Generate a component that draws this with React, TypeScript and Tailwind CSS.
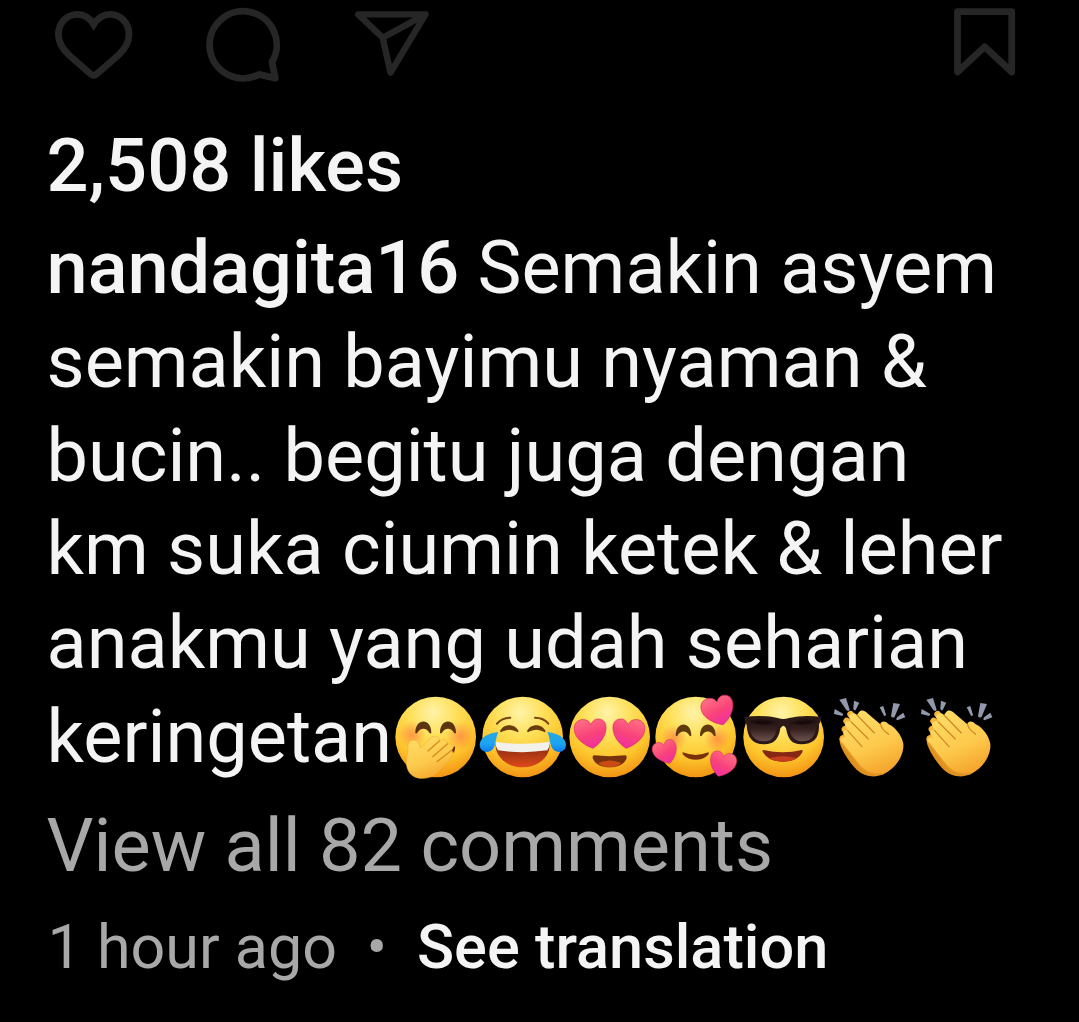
import type { ReactNode } from "react"

interface EmojiProps {
  label: string
  children: ReactNode
}

const HEART = "M54 96 C26 82 0 60 0 31 C0 11 13 1 28 1 C40 1 49 8 53 19 C59 7 68 1 79 3 C95 5 102 19 99 38 C95 62 76 84 54 96Z"
const EYE = "M0 34 C0 -11 48 -11 48 34 Q46 39 42 34 C34 18 14 18 6 34 Q2 39 0 34Z"

const Emoji = ({ label, children }: EmojiProps) => (
  <svg role="img" aria-label={label} viewBox="0 0 261 270" className="w-[87px] h-[90px] shrink-0 overflow-visible">
    {children}
  </svg>
)

const Face = () => <circle cx="131" cy="129" r="121" fill="url(#face)" />

const Heart = ({ transform }: { transform: string }) => (
  <path d={HEART} transform={transform} fill="url(#heart)" stroke="#d82a5c" strokeWidth="2" />
)

const Gradients = () => (
  <svg className="absolute w-0 h-0" aria-hidden="true">
    <defs>
      <radialGradient id="face" cx="0.47" cy="0.2" r="0.82">
        <stop offset="0" stopColor="#fff3a8" />
        <stop offset="0.35" stopColor="#fee05a" />
        <stop offset="0.7" stopColor="#fdc52c" />
        <stop offset="1" stopColor="#f28f12" />
      </radialGradient>
      <linearGradient id="heart" x1="0.3" y1="0" x2="0.6" y2="1">
        <stop offset="0" stopColor="#ff6f83" />
        <stop offset="0.55" stopColor="#f8427a" />
        <stop offset="1" stopColor="#f02fa4" />
      </linearGradient>
      <radialGradient id="blush">
        <stop offset="0" stopColor="#ff7043" stopOpacity="0.6" />
        <stop offset="1" stopColor="#ff7043" stopOpacity="0" />
      </radialGradient>
      <linearGradient id="mouth" x1="0" y1="0" x2="0" y2="1">
        <stop offset="0" stopColor="#7c2a0c" />
        <stop offset="1" stopColor="#e0491c" />
      </linearGradient>
      <linearGradient id="tear" x1="0" y1="0" x2="0" y2="1">
        <stop offset="0" stopColor="#29a8dc" />
        <stop offset="0.6" stopColor="#1ca4f4" />
        <stop offset="1" stopColor="#0a7bea" />
      </linearGradient>
      <linearGradient id="lens" x1="0" y1="0" x2="0" y2="1">
        <stop offset="0" stopColor="#1d0f0e" />
        <stop offset="0.45" stopColor="#35201f" />
        <stop offset="1" stopColor="#6e5350" />
      </linearGradient>
      <linearGradient id="hand" x1="0.2" y1="0" x2="0.6" y2="1">
        <stop offset="0" stopColor="#ffdd67" />
        <stop offset="0.6" stopColor="#fdc94c" />
        <stop offset="1" stopColor="#f5a52c" />
      </linearGradient>
    </defs>
  </svg>
)

const HandOverMouth = () => (
  <Emoji label="🤭">
    <Face />
    <circle cx="60" cy="122" r="42" fill="url(#blush)" />
    <circle cx="206" cy="126" r="44" fill="url(#blush)" />
    <path d={EYE} transform="translate(70 82)" fill="#5b3410" />
    <path d={EYE} transform="translate(144 82)" fill="#5b3410" />
    <path d="M164 172 Q178 170 188 156 Q194 171 176 183Z" fill="#6d2511" />
    <path
      d="M48 158 C46 138 70 132 78 145 L86 162 L118 130 C130 121 145 130 142 141 C153 132 169 138 166 150 C178 146 188 158 179 169 C187 176 182 187 175 195 L142 232 C124 248 112 252 96 253 C71 256 49 243 44 216 C39 199 49 181 48 158Z"
      fill="url(#hand)"
      stroke="#eba526"
      strokeWidth="1.5"
    />
    <path d="M142 141 L108 171 M166 150 L122 188 M179 169 L135 203" fill="none" stroke="#d98c1b" strokeWidth="4" strokeLinecap="round" />
  </Emoji>
)

const TearsOfJoy = () => (
  <Emoji label="😂">
    <Face />
    <g fill="none" stroke="#79420f" strokeWidth="6" strokeLinecap="round">
      <path d="M54 89 Q68 71 94 71" />
      <path d="M168 71 Q194 71 208 89" />
    </g>
    <path d="M63 112 C73 88 108 88 119 112 Q117 117 110 112 Q91 102 72 112 Q65 117 63 112Z" fill="#693c0e" />
    <path d="M144 112 C154 88 189 88 200 112 Q198 117 191 112 Q172 102 153 112 Q146 117 144 112Z" fill="#693c0e" />
    <path d="M50 147 Q131 157 212 147 C215 190 177 220 131 220 C85 220 47 190 50 147Z" fill="url(#mouth)" />
    <path d="M50 144 Q131 155 212 144 Q214 157 205 169 Q131 180 57 169 Q49 157 50 144Z" fill="#f3f1ec" />
    <path d="M58 114 C31 116 2 130 2 153 C3 177 35 181 45 160 C51 146 50 132 58 114Z" fill="url(#tear)" />
    <path d="M205 114 C232 116 261 130 261 153 C260 177 228 181 218 160 C212 146 213 132 205 114Z" fill="url(#tear)" />
  </Emoji>
)

const HeartEyes = () => (
  <Emoji label="😍">
    <Face />
    <Heart transform="translate(26 74) rotate(-4 50 50) scale(.96 .93)" />
    <Heart transform="translate(235 74) rotate(4 -50 50) scale(-.96 .93)" />
    <path d="M84 184 Q131 189 178 184 Q183 184 182 191 C177 210 157 220 131 220 C105 220 85 210 80 191 Q79 184 84 184Z" fill="#78310d" />
    <path d="M96 207 Q131 192 166 207 Q151 220 131 220 Q111 220 96 207Z" fill="#c94b13" />
  </Emoji>
)

const SmilingHearts = () => (
  <Emoji label="🥰">
    <circle cx="128" cy="129" r="121" fill="url(#face)" />
    <circle cx="62" cy="132" r="40" fill="url(#blush)" />
    <circle cx="194" cy="136" r="40" fill="url(#blush)" />
    <path d={EYE} transform="translate(68 91) scale(.98)" fill="#603a0d" />
    <path d={EYE} transform="translate(141 91) scale(.98)" fill="#603a0d" />
    <path d="M90 175 Q128 191 166 175 Q170 178 164 184 C146 202 110 202 92 184 Q86 178 90 175Z" fill="#7b300c" />
    <Heart transform="translate(148 6) rotate(-14 50 48) scale(.97 .92)" />
    <Heart transform="translate(1 139) rotate(-17 37 36) scale(.73 .74)" />
    <Heart transform="translate(248 173) rotate(14 -40 38) scale(-.79 .79)" />
  </Emoji>
)

const Sunglasses = () => (
  <Emoji label="😎">
    <Face />
    <path
      d="M13 69 Q68 62 113 72 Q130 78 147 72 Q192 62 244 69 L241 84 Q239 87 237 91 C239 132 220 151 184 151 C156 151 144 137 138 103 Q131 88 121 103 C116 137 100 151 74 151 C38 151 22 132 20 93 Q18 87 15 84Z"
      fill="#2b1917"
    />
    <path d="M27 80 Q67 70 111 84 C114 116 101 142 73 142 C40 142 27 120 27 80Z" fill="url(#lens)" />
    <path d="M149 84 Q190 70 230 80 C230 120 218 142 186 142 C157 142 145 116 149 84Z" fill="url(#lens)" />
    <path d="M33 84 Q67 77 99 86 Q69 99 33 84Z M159 86 Q190 77 222 84 Q190 99 159 86Z" fill="#0d0505" opacity="0.6" />
    <path d="M70 168 Q129 182 186 168 Q190 169 187 175 C178 193 157 203 129 203 C101 203 79 193 69 175 Q66 169 70 168Z" fill="#852713" />
    <path d="M86 193 Q129 181 171 193 Q155 203 129 203 Q102 203 86 193Z" fill="#c43d1d" />
  </Emoji>
)

const Clap = () => (
  <Emoji label="👏">
    <g fill="#9199ab">
      <path d="M23 45 L48 59 Q50 66 43 65 L21 60Z" />
      <path d="M37 17 L57 12 L68 47 Q65 55 58 48Z" />
      <path d="M81 20 L97 26 L86 48 Q81 52 79 43Z" />
      <path d="M158 40 L169 36 L177 62 Q175 69 170 64Z" />
      <path d="M199 27 L219 30 L203 68 Q196 74 192 66Z" />
      <path d="M229 56 L235 70 L211 79 Q205 77 211 69Z" />
    </g>
    {/* back hand */}
    <path d="M39 127 C35 142 40 157 51 176 C73 212 94 243 132 247 C157 249 181 238 190 225 L80 105Z" fill="#df9020" />
    <g stroke="#f8b53c" strokeLinecap="round" strokeWidth="20">
      <path d="M71 61 L84 76 M59 81 L75 96 M54 106 L68 122 M48 135 L70 161" />
    </g>
    {/* front hand */}
    <path
      d="M96 55 C102 45 115 50 123 59 L160 91 C162 78 178 81 185 91 C205 100 224 124 229 149 C232 183 207 222 174 237 C144 248 111 233 91 208 L43 146 C36 134 48 127 57 133 L51 124 C43 110 56 103 66 111 L56 98 C48 83 64 78 73 84 L68 75 C63 57 81 54 90 63Z"
      fill="url(#hand)"
    />
    <path
      d="M90 63 L142 117 M73 84 L124 135 M62 110 L105 158 M161 91 Q162 105 185 121"
      fill="none"
      stroke="#cd8627"
      strokeWidth="3.5"
      strokeLinecap="round"
    />
    <path d="M43 146 L91 208 C108 232 136 244 169 239" fill="none" stroke="#e39a27" strokeWidth="5" />
  </Emoji>
)

const Actions = () => (
  <div className="flex h-[90px] pl-[1.5px] pr-[2px] fill-none stroke-[#262626] [stroke-linejoin:round] [stroke-linecap:round]">
    <svg viewBox="0 0 90 90" strokeWidth="6.8" className="w-[90px] h-[90px]">
      <path d="M45.7 24.5 C41.5 17.5 35.5 14.3 29.5 14.3 C18.5 14.3 10.4 23 10.4 34.5 C10.4 43.5 15.5 50 21.5 55.5 L42.6 74 Q45.7 76.8 48.8 74 L70 55.5 C76 50 81 43.5 81 34.5 C81 23 72.9 14.3 62 14.3 C56 14.3 50 17.5 45.7 24.5Z" strokeLinejoin="miter" />
    </svg>
    <svg viewBox="0 0 90 90" strokeWidth="6.8" className="ml-[60px] w-[90px] h-[90px]">
      <path d="M74 62 A33.6 33.6 0 1 0 61 74.4 L77.3 78.2Z" />
    </svg>
    <svg viewBox="0 0 90 90" strokeWidth="6.4" className="ml-[60px] w-[90px] h-[90px]">
      <path d="M10.2 14.4 H77.5 L42.5 72.6 L34.7 37.8Z M34.7 37.8 L77.5 14.4" />
    </svg>
    <svg viewBox="0 0 90 90" strokeWidth="6.8" className="ml-auto w-[90px] h-[90px]">
      <path d="M18.5 11.6 H72.7 V72 L45.7 46.8 L18.5 72Z" />
    </svg>
  </div>
)

const App = () => {
  return (
    <main className="w-full h-[1022px] overflow-hidden bg-black pl-[46.5px] pr-12 text-[#f4f4f4] font-['Roboto',sans-serif] whitespace-nowrap">
      <Gradients />
      <Actions />
      <h2 className="mt-[29px] text-[74px] leading-[94px] font-medium">2,508 likes</h2>

      <div className="mt-[8px] text-[73.9px] leading-[93.8px]">
        <p>
          <span className="font-medium">nandagita16</span> Semakin asyem
        </p>
        <p>semakin bayimu nyaman &amp;</p>
        <p>bucin.. begitu juga dengan</p>
        <p>km suka ciumin ketek &amp; leher</p>
        <p>anakmu yang udah seharian</p>
        <div className="flex">
          <span className="w-[345.5px]">keringetan</span>
          <div className="flex pt-[4px]">
            <HandOverMouth />
            <TearsOfJoy />
            <HeartEyes />
            <SmilingHearts />
            <Sunglasses />
            <Clap />
            <Clap />
          </div>
        </div>
      </div>

      <p className="mt-[15px] text-[73.9px] leading-[94px] text-[#a8a8a8]">View all 82 comments</p>
      <div className="mt-[18px] pl-px flex text-[61px] leading-[72px]">
        <span className="w-[319px] text-[#a8a8a8]">1 hour ago</span>
        <span className="w-[50.5px] text-[#a8a8a8]">•</span>
        <span className="text-[61.3px] font-medium">See translation</span>
      </div>
    </main>
  )
}

export default App
